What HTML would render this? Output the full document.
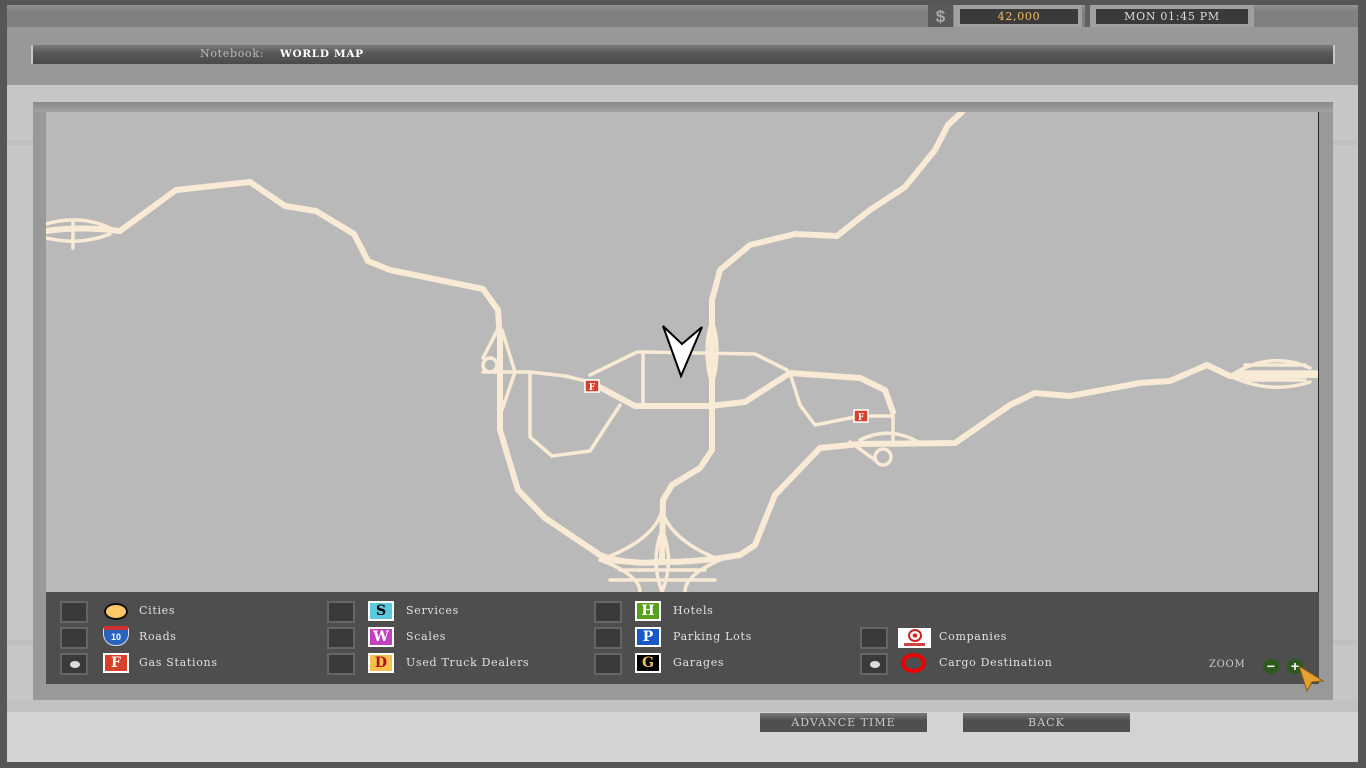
<!DOCTYPE html>
<html><head><meta charset="utf-8"><style>
*{margin:0;padding:0;box-sizing:border-box}
body{width:1366px;height:768px;background:#565656;position:relative;overflow:hidden;font-family:"DejaVu Serif","Liberation Serif",serif}
.a{position:absolute}
.t{font-size:11px;color:#e0e0e0;white-space:nowrap;letter-spacing:.7px}
.cb{position:absolute;width:28px;height:22px;background:#3a3a3a;border:2px solid #666}
.cb.on::after{content:"";position:absolute;left:8px;top:6px;width:10px;height:7px;border-radius:50%;background:#ddd}
.ic{position:absolute;width:26px;height:20px;border:2px solid #fff;font-weight:bold;font-size:14px;text-align:center;line-height:16px}
.btn{position:absolute;top:713px;width:167px;height:19px;background:linear-gradient(#7a7a7a,#4e4e4e 40%,#505050);color:#c8c8c8;font-size:11px;text-align:center;line-height:19px;letter-spacing:1px}
</style></head><body>
<div class="a" style="left:7px;top:5px;width:1351px;height:757px;background:#c6c6c6"></div>
<div class="a" style="left:7px;top:5px;width:1351px;height:22px;background:linear-gradient(#929292,#808080 30%,#808080)"></div>
<div class="a" style="left:7px;top:27px;width:1351px;height:58px;background:#989898"></div>
<div class="a" style="left:7px;top:712px;width:1351px;height:50px;background:#d3d3d3"></div>
<div class="a" style="left:7px;top:700px;width:1351px;height:12px;background:#c1c1c1"></div>
<div class="a" style="left:7px;top:140px;width:1351px;height:5px;background:#c0c0c0"></div>
<div class="a" style="left:7px;top:640px;width:1351px;height:5px;background:#c0c0c0"></div>
<div class="a" style="left:928px;top:5px;width:25px;height:22px;background:#5a5a5a;color:#aaa;font:bold 17px 'Liberation Sans',sans-serif;text-align:center;line-height:24px">$</div>
<div class="a" style="left:954px;top:5px;width:128px;height:22px;background:#a0a0a0"></div>
<div class="a t" style="left:960px;top:9px;width:118px;height:15px;background:#3a3a3a;color:#f2c060;text-align:center;line-height:15px">42,000</div>
<div class="a" style="left:1085px;top:5px;width:5px;height:22px;background:#606060"></div>
<div class="a" style="left:1090px;top:5px;width:164px;height:22px;background:#a0a0a0"></div>
<div class="a t" style="left:1096px;top:9px;width:152px;height:15px;background:#3a3a3a;color:#ddd;text-align:center;line-height:15px">MON 01:45 PM</div>
<div class="a" style="left:31px;top:45px;width:1304px;height:19px;background:#c8c8c8"></div>
<div class="a" style="left:33px;top:45px;width:1300px;height:19px;background:linear-gradient(#7a7a7a,#5a5a5a 40%,#4a4a4a)"></div>
<div class="a t" style="left:200px;top:47px;color:#bbb;line-height:14px">Notebook:</div>
<div class="a t" style="left:280px;top:47px;color:#fff;line-height:14px;font-weight:bold;font-size:10.5px">WORLD MAP</div>
<div class="a" style="left:33px;top:102px;width:1300px;height:598px;background:#999"></div>
<div class="a" style="left:33px;top:102px;width:1300px;height:10px;background:linear-gradient(#8a8a8a,#a2a2a2)"></div>
<div class="a" style="left:46px;top:112px;width:1273px;height:480px;background:#b9b9b9;border-right:1px solid #222"></div>
<svg class="a" style="left:0;top:0" width="1366" height="768">
<defs><clipPath id="c"><rect x="46" y="112" width="1272" height="480"/></clipPath></defs>
<g clip-path="url(#c)" fill="none" stroke="#f8ead4" stroke-linejoin="round" stroke-linecap="round">
<g stroke-width="6">
<path d="M46,231 Q80,226 120,231 L176,190 L250,182 L285,206 L316,211 L354,234 L368,261 L390,270 L483,289 L498,310 L500,340 L500,430 L518,490 L545,518 L600,555 Q625,565 662,562"/>
<path d="M662,562 Q700,562 740,555 L755,545 L775,495 L820,448 L860,444 L955,443 L1010,405 L1035,393 L1070,396 L1140,383 L1170,381 L1207,365 L1230,376 L1318,375"/>
<path d="M662,560 L663,500 L672,485 L700,468 L712,450 L712,300 L720,270 L750,245 L795,234 L837,236 L870,210 L905,187 L935,150 L948,125 L962,112"/>
<path d="M590,382 L635,406 L710,406 L745,402 L790,373 L860,378 L885,390 L893,412"/>
</g>
<g stroke-width="3.5">
<path d="M483,372 L530,372 L565,376 L590,382"/>
<circle cx="490" cy="365" r="7"/>
<path d="M500,325 L483,358"/><path d="M502,330 L515,372 L502,410"/>
<path d="M530,372 L530,437 L552,456 L590,451 L620,405"/>
<path d="M590,375 L637,352 L643,352 L643,405"/>
<path d="M643,352 L755,354 L787,370"/>
<path d="M790,373 L800,405 L815,425 L860,416 L893,416 L893,445"/>
<circle cx="883" cy="457" r="8"/>
<path d="M850,442 L875,460"/><path d="M860,440 Q890,425 920,443"/>
<path d="M712,320 Q702,350 712,385 Q722,350 712,320"/>
<path d="M46,224 Q80,214 110,228 M46,238 Q80,246 110,234 M73,222 L73,248"/>
<path d="M1230,376 Q1270,350 1310,368 M1230,376 Q1270,395 1310,382 M1245,365 L1305,365 M1245,380 L1305,380 M1240,372 L1318,372"/>
<path d="M662,510 Q655,540 600,560 Q630,565 662,560 M662,510 Q670,540 720,560 M600,560 Q640,575 640,592 M720,560 Q685,575 685,592 M662,530 Q650,560 662,592 M662,530 Q675,560 662,592 M620,570 L705,570 M610,580 L715,580"/>
</g>
</g>
<g stroke="#fff" stroke-width="1.5"><rect x="585" y="380" width="14" height="12" fill="#d8402a"/><rect x="854" y="410" width="14" height="12" fill="#d8402a"/></g>
<text x="592" y="390" font-size="9" fill="#fff" text-anchor="middle" font-weight="bold" font-family="DejaVu Serif">F</text>
<text x="861" y="420" font-size="9" fill="#fff" text-anchor="middle" font-weight="bold" font-family="DejaVu Serif">F</text>
<path d="M663,326 L682,344 L702,327 L681,376 Z" fill="#fff" stroke="#000" stroke-width="2" stroke-linejoin="miter"/>
</svg>
<div class="a" style="left:46px;top:592px;width:1273px;height:92px;background:#4e4e4e"></div>
<div class="cb" style="left:60px;top:601px"></div><div class="cb" style="left:60px;top:627px"></div><div class="cb on" style="left:60px;top:653px"></div>
<div class="cb" style="left:327px;top:601px"></div><div class="cb" style="left:327px;top:627px"></div><div class="cb" style="left:327px;top:653px"></div>
<div class="cb" style="left:594px;top:601px"></div><div class="cb" style="left:594px;top:627px"></div><div class="cb" style="left:594px;top:653px"></div>
<div class="cb" style="left:860px;top:627px"></div><div class="cb on" style="left:860px;top:653px"></div>
<div class="a" style="left:104px;top:603px;width:24px;height:17px;border-radius:50%;background:#fcc86a;border:2px solid #111"></div>
<div class="a" style="left:103px;top:626px;width:26px;height:20px;border-radius:3px 3px 12px 12px;background:#2a62c0;border:1px solid #ddd;border-top:4px solid #d03030;color:#fff;font:bold 9px 'Liberation Sans',sans-serif;text-align:center;line-height:14px">10</div>
<div class="ic" style="left:103px;top:653px;background:#d8402a;color:#fff">F</div>
<div class="ic" style="left:368px;top:601px;background:#5cc8dc;color:#000">S</div>
<div class="ic" style="left:368px;top:627px;background:#c040c0;color:#fff">W</div>
<div class="ic" style="left:368px;top:653px;background:#f4c050;color:#b01010">D</div>
<div class="ic" style="left:635px;top:601px;background:#5aa020;color:#fff">H</div>
<div class="ic" style="left:635px;top:627px;background:#1858c8;color:#fff">P</div>
<div class="ic" style="left:635px;top:653px;background:#000;color:#f0c050">G</div>
<div class="a" style="left:898px;top:628px;width:33px;height:20px;background:#fff"><div style="margin:1px auto;width:14px;height:13px;border:2px solid #d02020;border-radius:50%;background:radial-gradient(#d02020 30%,#fff 35%)"></div><div style="height:3px;margin:0 6px;background:#c44"></div></div>
<div class="a" style="left:901px;top:653px;width:25px;height:20px;border:4px solid #e00;border-radius:50%"></div>
<div class="a t" style="left:139px;top:604px">Cities</div>
<div class="a t" style="left:139px;top:630px">Roads</div>
<div class="a t" style="left:139px;top:656px">Gas Stations</div>
<div class="a t" style="left:406px;top:604px">Services</div>
<div class="a t" style="left:406px;top:630px">Scales</div>
<div class="a t" style="left:406px;top:656px">Used Truck Dealers</div>
<div class="a t" style="left:673px;top:604px">Hotels</div>
<div class="a t" style="left:673px;top:630px">Parking Lots</div>
<div class="a t" style="left:673px;top:656px">Garages</div>
<div class="a t" style="left:939px;top:630px">Companies</div>
<div class="a t" style="left:939px;top:656px">Cargo Destination</div>
<div class="a t" style="left:1209px;top:659px;font-size:10px;color:#ccc">ZOOM</div>
<div class="a" style="left:1263px;top:659px;width:16px;height:15px;border-radius:50%;background:#2c5a1c;color:#fff;font:bold 14px 'Liberation Sans',sans-serif;text-align:center;line-height:14px">−</div>
<div class="a" style="left:1287px;top:659px;width:16px;height:15px;border-radius:50%;background:#2c5a1c;color:#fff;font:bold 14px 'Liberation Sans',sans-serif;text-align:center;line-height:14px">+</div>
<svg class="a" style="left:1296px;top:664px" width="30" height="28"><path d="M3,2 L27,17 L16,18 L11,27 Z" fill="#e4a030" stroke="#8a5a10" stroke-width="1"/></svg>
<div class="btn" style="left:760px">ADVANCE TIME</div>
<div class="btn" style="left:963px">BACK</div>
</body></html>
